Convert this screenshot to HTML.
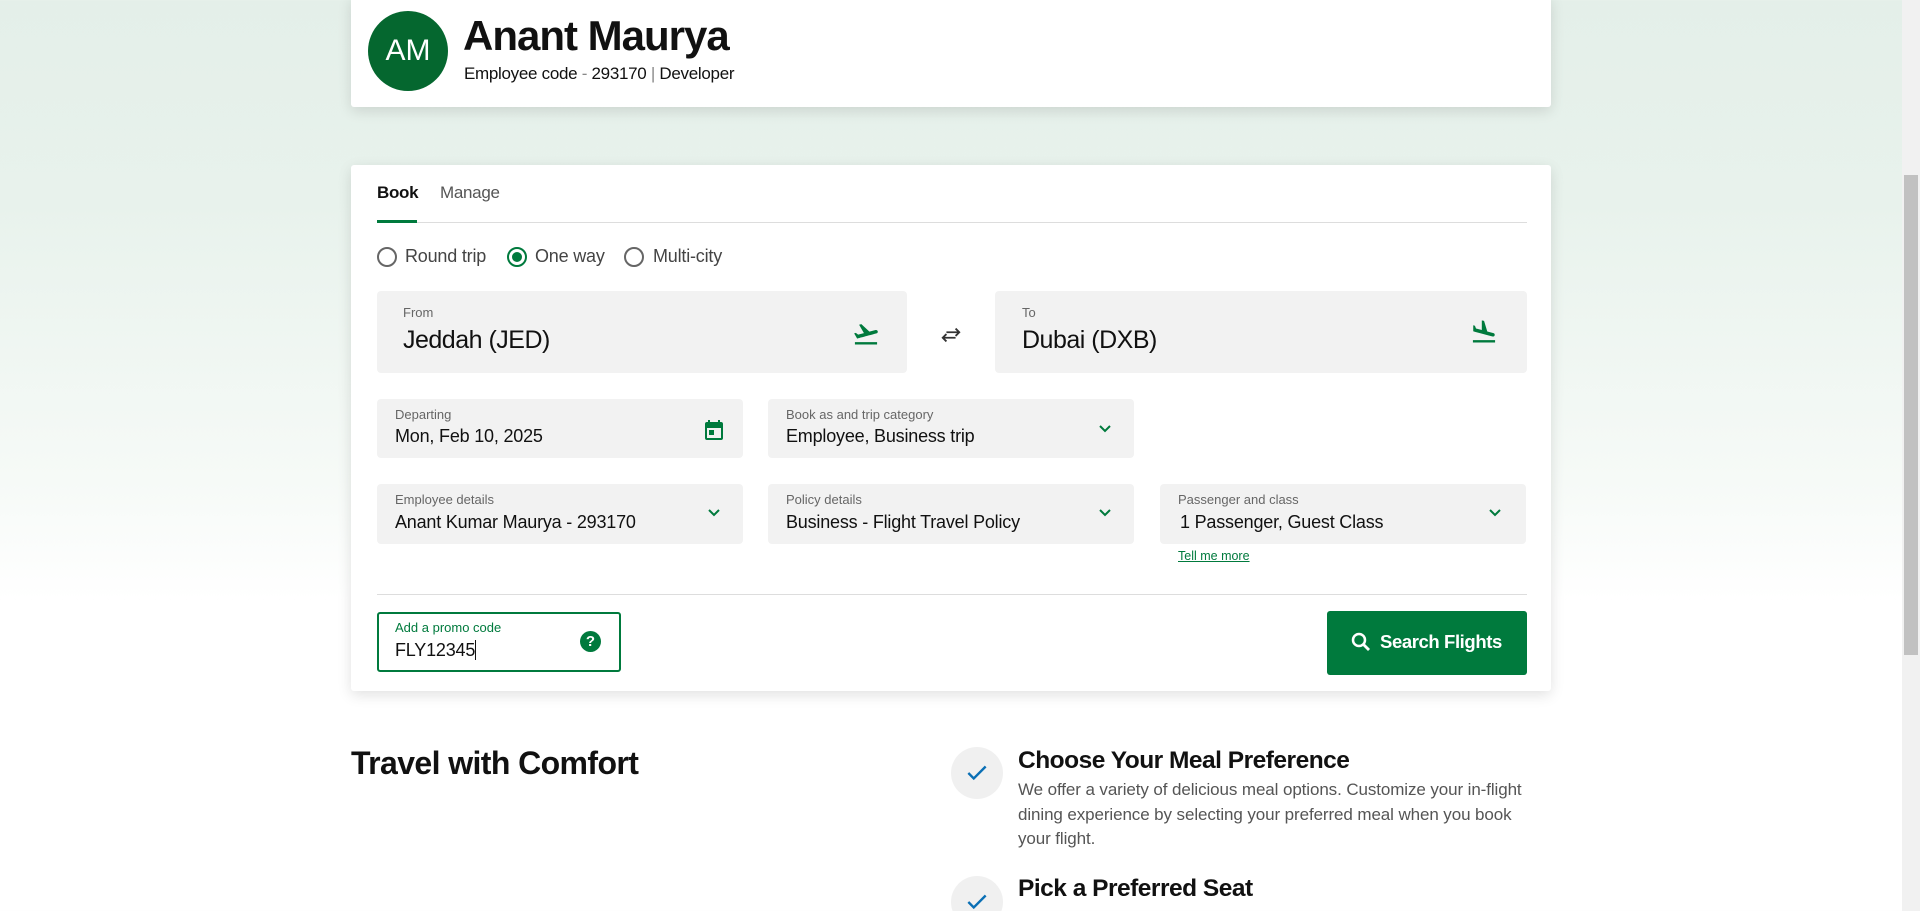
<!DOCTYPE html>
<html><head><meta charset="utf-8">
<style>
*{box-sizing:border-box;margin:0;padding:0}
html,body{width:1920px;height:911px;overflow:hidden}
body{font-family:"Liberation Sans",sans-serif;color:#111;background:linear-gradient(180deg,#e4efe9 0px,#e8f2ec 200px,#f6faf7 480px,#fff 600px,#fff 911px);position:relative}
.abs{position:absolute}
.card{position:absolute;background:#fff;box-shadow:0 4px 14px rgba(0,0,0,.12);border-radius:3px}
.box{position:absolute;background:#f2f2f2;border-radius:4px}
.lbl{position:absolute;font-size:13px;color:#666}
.val{position:absolute;font-size:18px;color:#111;letter-spacing:-0.2px}
.chev{position:absolute;width:16px;height:16px}
.radio{position:absolute;width:20px;height:20px;border:2px solid #666;border-radius:50%}
.rt{position:absolute;font-size:18px;color:#444;letter-spacing:-0.2px}
.chk{position:absolute;width:52px;height:52px;border-radius:50%;background:#f0f0f0}
</style></head><body>

<div class="abs" style="left:1902px;top:0;width:18px;height:911px;background:#f1f1f1"></div>
<div class="abs" style="left:1904px;top:175px;width:14px;height:480px;background:#c1c1c1"></div>

<div class="card" style="left:351px;top:-4px;width:1200px;height:111px"></div>
<div class="abs" style="left:368px;top:11px;width:80px;height:80px;border-radius:50%;background:#05672f;color:#fff;font-size:30px;line-height:80px;text-align:center">AM</div>
<div class="abs" style="left:463px;top:12px;font-size:42px;font-weight:bold;letter-spacing:-1px">Anant Maurya</div>
<div class="abs" style="left:464px;top:64px;font-size:17px;letter-spacing:-0.3px">Employee code <span style="color:#888">-</span> 293170 <span style="color:#888">|</span> Developer</div>

<div class="card" style="left:351px;top:165px;width:1200px;height:526px"></div>
<div class="abs" style="left:377px;top:183px;font-size:17px;font-weight:bold;letter-spacing:-0.3px">Book</div>
<div class="abs" style="left:440px;top:183px;font-size:17px;color:#555;letter-spacing:-0.3px">Manage</div>
<div class="abs" style="left:377px;top:222px;width:1150px;height:1px;background:#ddd"></div>
<div class="abs" style="left:377px;top:220px;width:40px;height:3px;background:#007a3d"></div>

<div class="radio" style="left:377px;top:247px"></div><div class="rt" style="left:405px;top:246px">Round trip</div>
<div class="radio" style="left:507px;top:247px;border-color:#007a3d"><div style="position:absolute;left:3px;top:3px;width:10px;height:10px;border-radius:50%;background:#007a3d"></div></div><div class="rt" style="left:535px;top:246px">One way</div>
<div class="radio" style="left:624px;top:247px"></div><div class="rt" style="left:653px;top:246px">Multi-city</div>

<div class="box" style="left:377px;top:291px;width:530px;height:82px"></div>
<div class="lbl" style="left:403px;top:305px">From</div>
<div class="val" style="left:403px;top:326px;font-size:25px;letter-spacing:-0.5px">Jeddah (JED)</div>
<svg class="abs" style="left:852px;top:320px" width="28" height="28" viewBox="0 0 24 24"><path fill="#007a3d" d="M2.5 19h19v2h-19zM22.07 9.64c-.21-.8-1.04-1.28-1.84-1.06L14.92 10l-6.9-6.430-1.93.51 4.14 7.17-4.97 1.33-1.970-1.54-1.45.39 2.59 4.49s7.12-1.9 16.57-4.43c.81-.23 1.28-1.05 1.07-1.85z"/></svg>
<svg class="abs" style="left:940px;top:324px" width="22" height="22" viewBox="0 0 24 24"><path fill="none" stroke="#333" stroke-width="2" d="M3 15h14M7 11l-4 4 4 4M21 9H7M17 5l4 4-4 4"/></svg>
<div class="box" style="left:995px;top:291px;width:532px;height:82px"></div>
<div class="lbl" style="left:1022px;top:305px">To</div>
<div class="val" style="left:1022px;top:326px;font-size:25px;letter-spacing:-0.5px">Dubai (DXB)</div>
<svg class="abs" style="left:1470px;top:318px" width="28" height="28" viewBox="0 0 24 24"><path fill="#007a3d" d="M2.5 19h19v2h-19zM9.68 13.27l4.35 1.16 5.31 1.42c.8.21 1.62-.26 1.84-1.06.21-.8-.26-1.62-1.060-1.84l-5.31-1.42-2.76-9.02L10.12 2v8.28L5.15 8.95l-.93-2.32-1.450-.39v5.17l1.6.43 5.31 1.43z"/></svg>

<div class="box" style="left:377px;top:399px;width:366px;height:59px"></div>
<div class="lbl" style="left:395px;top:407px">Departing</div>
<div class="val" style="left:395px;top:426px">Mon, Feb 10, 2025</div>
<svg class="abs" style="left:702px;top:418px" width="24" height="24" viewBox="0 0 24 24"><path fill="#007a3d" d="M19 4h-1V2h-2v2H8V2H6v2H5a2 2 0 0 0-2 2v14a2 2 0 0 0 2 2h14a2 2 0 0 0 2-2V6a2 2 0 0 0-2-2zm0 16H5V10h14zM7 12h5v5H7z"/></svg>
<div class="box" style="left:768px;top:399px;width:366px;height:59px"></div>
<div class="lbl" style="left:786px;top:407px">Book as and trip category</div>
<div class="val" style="left:786px;top:426px">Employee, Business trip</div>
<svg class="chev" style="left:1097px;top:421px" viewBox="0 0 16 16"><path d="M3 5l5 5 5-5" fill="none" stroke="#007a3d" stroke-width="2"/></svg>

<div class="box" style="left:377px;top:484px;width:366px;height:60px"></div>
<div class="lbl" style="left:395px;top:492px">Employee details</div>
<div class="val" style="left:395px;top:512px">Anant Kumar Maurya - 293170</div>
<svg class="chev" style="left:706px;top:505px" viewBox="0 0 16 16"><path d="M3 5l5 5 5-5" fill="none" stroke="#007a3d" stroke-width="2"/></svg>
<div class="box" style="left:768px;top:484px;width:366px;height:60px"></div>
<div class="lbl" style="left:786px;top:492px">Policy details</div>
<div class="val" style="left:786px;top:512px">Business - Flight Travel Policy</div>
<svg class="chev" style="left:1097px;top:505px" viewBox="0 0 16 16"><path d="M3 5l5 5 5-5" fill="none" stroke="#007a3d" stroke-width="2"/></svg>
<div class="box" style="left:1160px;top:484px;width:366px;height:60px"></div>
<div class="lbl" style="left:1178px;top:492px">Passenger and class</div>
<div class="val" style="left:1180px;top:512px">1 Passenger, Guest Class</div>
<svg class="chev" style="left:1487px;top:505px" viewBox="0 0 16 16"><path d="M3 5l5 5 5-5" fill="none" stroke="#007a3d" stroke-width="2"/></svg>
<div class="abs" style="left:1178px;top:549px;font-size:12.5px;color:#007a3d;text-decoration:underline">Tell me more</div>

<div class="abs" style="left:377px;top:594px;width:1150px;height:1px;background:#ddd"></div>
<div class="abs" style="left:377px;top:612px;width:244px;height:60px;border:2px solid #007a3d;border-radius:3px;background:#fff"></div>
<div class="abs" style="left:395px;top:620px;font-size:13px;color:#007a3d">Add a promo code</div>
<div class="val" style="left:395px;top:640px">FLY12345<span style="display:inline-block;width:1px;height:20px;background:#111;vertical-align:-4px"></span></div>
<div class="abs" style="left:580px;top:631px;width:21px;height:21px;border-radius:50%;background:#007a3d;color:#fff;font-weight:bold;font-size:15px;line-height:21px;text-align:center">?</div>
<div class="abs" style="left:1327px;top:611px;width:200px;height:64px;background:#007a3d;border-radius:3px"></div>
<svg class="abs" style="left:1349px;top:630px" width="24" height="24" viewBox="0 0 24 24"><circle cx="10" cy="10" r="6" fill="none" stroke="#fff" stroke-width="2.5"/><path d="M14.5 14.5L20 20" stroke="#fff" stroke-width="2.8"/></svg>
<div class="abs" style="left:1380px;top:631px;font-size:18.5px;font-weight:bold;color:#fff;letter-spacing:-0.4px">Search Flights</div>

<div class="abs" style="left:351px;top:745px;font-size:32px;font-weight:bold;letter-spacing:-0.6px">Travel with Comfort</div>
<div class="chk" style="left:951px;top:747px"></div>
<svg class="abs" style="left:964px;top:760px" width="26" height="26" viewBox="0 0 24 24"><path d="M4 12l5 5L20 6" fill="none" stroke="#0a6fb5" stroke-width="2.2"/></svg>
<div class="abs" style="left:1018px;top:747px;font-size:24.5px;font-weight:bold;letter-spacing:-0.5px">Choose Your Meal Preference</div>
<div class="abs" style="left:1018px;top:778px;width:528px;font-size:17px;line-height:24.5px;color:#555;letter-spacing:-0.1px">We offer a variety of delicious meal options. Customize your in-flight dining experience by selecting your preferred meal when you book your flight.</div>
<div class="chk" style="left:951px;top:876px"></div>
<svg class="abs" style="left:964px;top:889px" width="26" height="26" viewBox="0 0 24 24"><path d="M4 12l5 5L20 6" fill="none" stroke="#0a6fb5" stroke-width="2.2"/></svg>
<div class="abs" style="left:1018px;top:875px;font-size:24.5px;font-weight:bold;letter-spacing:-0.5px">Pick a Preferred Seat</div>
</body></html>
